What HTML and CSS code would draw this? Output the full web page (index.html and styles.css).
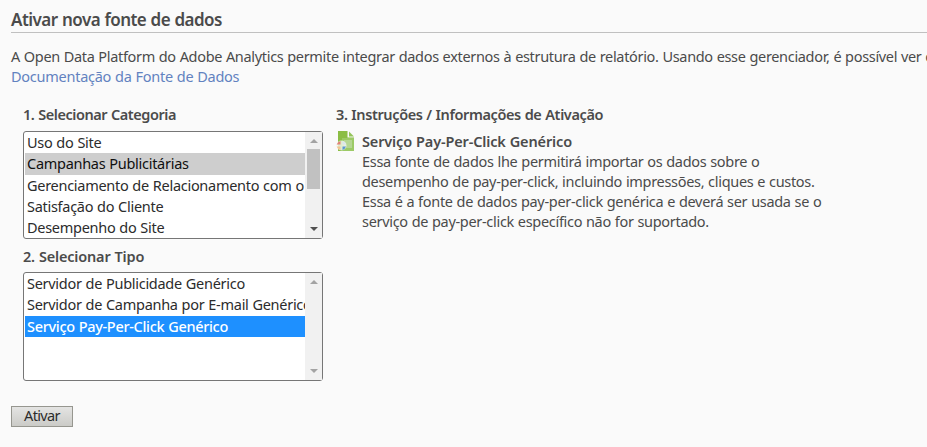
FILE: index.html
```
<!DOCTYPE html>
<html lang="pt-BR">
<head>
<meta charset="utf-8">
<title>Ativar nova fonte de dados</title>
<link rel="stylesheet" href="styles.css">
</head>
<body>
<h1 class="title">Ativar nova fonte de dados</h1>
<p class="intro">A Open Data Platform do Adobe Analytics permite integrar dados externos à estrutura de relatório. Usando esse gerenciador, é possível ver os</p>
<a class="doc-link">Documentação da Fonte de Dados</a>
<main class="columns">
  <section class="choices">
    <h2 class="heading heading-category">1. Selecionar Categoria</h2>
    <div class="listbox">
      <ul class="options">
        <li>Uso do Site</li>
        <li class="chosen">Campanhas Publicitárias</li>
        <li>Gerenciamento de Relacionamento com o</li>
        <li>Satisfação do Cliente</li>
        <li>Desempenho do Site</li>
      </ul>
      <div class="scrollbar"><i class="up"></i><i class="thumb"></i><i class="down active"></i></div>
    </div>
    <h2 class="heading heading-type">2. Selecionar Tipo</h2>
    <div class="listbox listbox-type">
      <ul class="options">
        <li>Servidor de Publicidade Genérico</li>
        <li>Servidor de Campanha por E-mail Genérico</li>
        <li class="selected">Serviço Pay-Per-Click Genérico</li>
      </ul>
      <div class="scrollbar"><i class="up"></i><i class="down"></i></div>
    </div>
  </section>
  <section class="info">
    <h2 class="heading heading-info">3. Instruções / Informações de Ativação</h2>
    <div class="service">
      <svg class="icon" width="19" height="21" viewBox="0 0 19 21">
        <path d="M2 0h10l6 6v14H2z" fill="#8bbd45"/>
        <path d="M6 7h12v13H6z" fill="#9cca66"/>
        <path d="M8 9h8v8H8z" fill="#b5d692"/>
        <path d="M11.500 0H14l5 5v1.500h-7.500z" fill="#fafafa"/>
        <path d="M13 .5l5 5h-5z" fill="#94c45a"/>
        <circle cx="5.500" cy="14.500" r="5" fill="#f4f7f1" opacity=".8"/>
        <path d="M4.500 10v3.500H.7A5 5 0 0 1 4.500 10z" fill="#e08377"/>
        <path d="M6.500 10v3.500H10A5 5 0 0 0 6.500 10z" fill="#dbe5ee"/>
        <path d="M4.500 15.500V19a5 5 0 0 1-3.800-3.500z" fill="#f2c592"/>
        <path d="M6.500 15.500H10A5 5 0 0 1 6.500 19z" fill="#5d97d2"/>
      </svg>
      <div>
        <h3 class="service-name">Serviço Pay-Per-Click Genérico</h3>
        <p class="description">Essa fonte de dados lhe permitirá importar os dados sobre o<br>desempenho de pay-per-click, incluindo impressões, cliques e custos.<br>Essa é a fonte de dados pay-per-click genérica e deverá ser usada se o<br>serviço de pay-per-click específico não for suportado.</p>
      </div>
    </div>
  </section>
</main>
<button class="activate">Ativar</button>
</body>
</html>
```

FILE: styles.css
```
* { box-sizing: border-box; margin: 0; padding: 0; }
body {
  height: 447px;
  padding: 9px 0 0 11px;
  overflow: hidden;
  background: #fafafa;
  color: #4b4b4b;
  font: 14.5px/20px "Noto Sans", "Open Sans", sans-serif;
  letter-spacing: -.31px;
  word-spacing: .4px;
}
.title {
  height: 24px;
  border-bottom: 1px solid #c0c0c0;
  font-size: 17px;
  line-height: 22px;
  font-weight: 600;
  letter-spacing: -.52px;
}
.intro { margin-top: 13px; white-space: nowrap; letter-spacing: -.325px; }
.doc-link { display: block; color: #6282c0; letter-spacing: -.26px; }
.columns { display: flex; margin: 18px 0 0 12px; }
.choices { width: 300px; }
.heading { font-size: 14.5px; line-height: 20px; font-weight: 600; }
.heading-category { letter-spacing: -.435px; margin-bottom: 7px; }
.heading-type { letter-spacing: -.18px; margin: 7px 0 6px; }
.heading-info { letter-spacing: -.38px; }
.listbox {
  display: flex;
  width: 300px;
  height: 108px;
  padding: 0 1px;
  border: 1px solid #767676;
  border-radius: 3px;
  background: #fff;
  color: #2c2c2c;
  letter-spacing: -.28px;
}
.listbox-type { height: 109px; }
.options { width: 280px; overflow: hidden; list-style: none; line-height: 21.3px; }
.options li { height: 21.3px; padding-left: 2px; white-space: nowrap; }
.options .chosen { background: #cecece; color: #101010; }
.options .selected { background: #1e90ff; color: #fff; font-weight: 500; letter-spacing: -.31px; }
.scrollbar {
  display: flex;
  flex-direction: column;
  align-items: center;
  width: 17px;
  margin-right: -1px;
  padding: 7px 0;
  background: #f1f1f1;
}
.up, .down { border: solid transparent; border-width: 0 4px; }
.up { border-bottom: 4px solid #a3a3a3; }
.down { margin-top: auto; border-top: 4px solid #a3a3a3; }
.down.active { border-top-color: #505050; }
.thumb { width: 13px; height: 40px; margin-top: 6px; background: #c1c1c1; }
.info { margin-left: 13px; }
.service { display: flex; margin-top: 7px; }
.icon { flex: none; margin-right: 7px; }
.service-name { font-size: 14.5px; line-height: 20px; font-weight: 600; letter-spacing: -.145px; }
.description { white-space: nowrap; }
.activate {
  display: block;
  width: 62px;
  height: 21px;
  margin-top: 25px;
  padding-bottom: 2px;
  border: 1px solid #96968f;
  background: linear-gradient(#e4e4e3, #cbcbc7);
  color: #2c2c2c;
  font: 14.5px/17px "Noto Sans", sans-serif;
  letter-spacing: -.65px;
}
```
